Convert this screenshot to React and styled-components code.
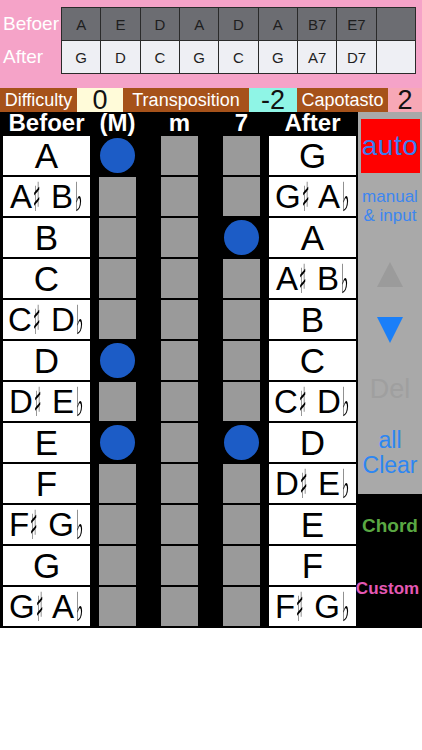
import React from 'react';
import styled, { createGlobalStyle } from 'styled-components';

const GlobalStyle = createGlobalStyle`
  html, body { margin: 0; padding: 0; background: #fff; }
  body { font-family: "Liberation Sans", Arial, sans-serif; }
  * { box-sizing: border-box; }
`;

const Screen = styled.div`
  width: 422px;
  height: 750px;
  background: #fff;
  overflow: hidden;
`;

const TopArea = styled.div`
  display: flex;
  align-items: flex-start;
  height: 88px;
  padding: 7px 6px 0 0;
  background: #f5a3c8;
`;

const Labels = styled.div`
  width: 61px;
  display: flex;
  flex-direction: column;
`;

const Label = styled.div`
  height: 33px;
  line-height: 33px;
  padding-left: 3px;
  color: #fff;
  font-size: 19px;
  white-space: nowrap;
`;

const ChordTable = styled.div`
  flex: 1;
  display: grid;
  grid-template-columns: repeat(9, 1fr);
  grid-template-rows: 32px 32px;
  gap: 1px;
  padding: 1px;
  background: #2a2a2a;
`;

const ChordCell = styled.div`
  display: flex;
  align-items: center;
  justify-content: center;
  background: ${(p) => (p.$dark ? '#6c6d72' : '#eeeff4')};
  color: #1e1e1e;
  font-size: 15px;
`;

const SettingsBar = styled.div`
  display: flex;
  height: 24px;
`;

const SettingLabel = styled.div`
  width: ${(p) => p.$w}px;
  display: flex;
  align-items: center;
  justify-content: center;
  background: #a6521a;
  color: #fff;
  font-size: 18px;
  white-space: nowrap;
`;

const SettingValue = styled.div`
  width: ${(p) => p.$w}px;
  display: flex;
  align-items: center;
  justify-content: center;
  background: ${(p) => p.$bg};
  color: #111;
  font-size: 27px;
  line-height: 1;
`;

const Main = styled.div`
  display: flex;
  height: 516px;
  background: #000;
`;

const Board = styled.div`
  width: 358px;
  padding: 0 0 2px 3px;
  display: grid;
  grid-template-columns: 87px 53px 53px 37px 87px;
  grid-template-rows: 22px repeat(12, 39px);
  column-gap: 9px;
  row-gap: 2px;
`;

const ColHead = styled.div`
  width: ${(p) => (p.$narrow ? '37px' : '87px')};
  display: flex;
  align-items: center;
  justify-content: center;
  color: #fff;
  font-weight: bold;
  font-size: 24px;
  line-height: 1;
  white-space: nowrap;
`;

const NoteCell = styled.div`
  display: flex;
  align-items: center;
  justify-content: center;
  background: #fff;
  color: #000;
  font-size: ${(p) => (p.$double ? 33 : 35)}px;
  line-height: 1;
  white-space: pre;
`;

const AccBox = styled.span`
  display: inline-flex;
  justify-content: center;
  width: 10px;
  line-height: 30px;
`;

const AccGlyph = styled.span`
  display: inline-block;
  flex: none;
  font-family: "DejaVu Sans", sans-serif;
  font-size: 40px;
  line-height: 30px;
  color: #000;
  transform: scaleX(0.4);
  filter: grayscale(1);
`;

const Slot = styled.div`
  width: 37px;
  display: flex;
  align-items: center;
  justify-content: center;
  background: ${(p) => (p.$on ? 'transparent' : '#9a9a9a')};
`;

const Dot = styled.div`
  width: 35px;
  height: 35px;
  flex: none;
  border-radius: 50%;
  background: #1c5cc6;
`;

const Side = styled.div`
  width: 64px;
  display: flex;
  flex-direction: column;
`;

const Controls = styled.div`
  height: 382px;
  display: flex;
  flex-direction: column;
  align-items: center;
  background: #a9a9a9;
`;

const AutoButton = styled.div`
  width: 59px;
  height: 54px;
  margin-top: 7px;
  display: flex;
  align-items: center;
  justify-content: center;
  background: #ff0000;
  color: #3b7cf0;
  font-size: 28px;
  letter-spacing: 0.5px;
`;

const ControlText = styled.div`
  margin-top: ${(p) => p.$mt}px;
  color: ${(p) => p.$color};
  font-size: ${(p) => p.$size}px;
  line-height: ${(p) => p.$lh}px;
  text-align: center;
  white-space: nowrap;
`;

const Arrow = styled.svg`
  display: block;
  margin-top: ${(p) => p.$mt}px;
  flex: none;
`;

const Extras = styled.div`
  flex: 1;
  display: flex;
  flex-direction: column;
  align-items: center;
  background: #000;
`;

const ExtraLabel = styled.div`
  margin-top: ${(p) => p.$mt}px;
  margin-left: ${(p) => p.$ml || 0}px;
  color: ${(p) => p.$color};
  font-weight: bold;
  font-size: ${(p) => p.$size}px;
  line-height: 1;
  white-space: nowrap;
`;

const before = ['A', 'E', 'D', 'A', 'D', 'A', 'B7', 'E7', ''];
const after = ['G', 'D', 'C', 'G', 'C', 'G', 'A7', 'D7', ''];

const notes = [
  ['A', 'G'],
  ['A♯ B♭', 'G♯ A♭'],
  ['B', 'A'],
  ['C', 'A♯ B♭'],
  ['C♯ D♭', 'B'],
  ['D', 'C'],
  ['D♯ E♭', 'C♯ D♭'],
  ['E', 'D'],
  ['F', 'D♯ E♭'],
  ['F♯ G♭', 'E'],
  ['G', 'F'],
  ['G♯ A♭', 'F♯ G♭'],
];

const marks = {
  0: [true, false, false],
  2: [false, false, true],
  5: [true, false, false],
  7: [true, false, true],
};

function NoteName({ name }) {
  const parts = name.split(/([♯♭])/);
  return (
    <>
      {parts.map((p, i) =>
        p === '♯' || p === '♭' ? (
          <AccBox key={i}>
            <AccGlyph>{p}</AccGlyph>
          </AccBox>
        ) : (
          <React.Fragment key={i}>{p}</React.Fragment>
        )
      )}
    </>
  );
}

export default function App() {
  return (
    <Screen>
      <GlobalStyle />
      <TopArea>
        <Labels>
          <Label>Befoer</Label>
          <Label>After</Label>
        </Labels>
        <ChordTable>
          {before.map((c, i) => (
            <ChordCell key={'b' + i} $dark>{c}</ChordCell>
          ))}
          {after.map((c, i) => (
            <ChordCell key={'a' + i}>{c}</ChordCell>
          ))}
        </ChordTable>
      </TopArea>
      <SettingsBar>
        <SettingLabel $w={77}>Difficulty</SettingLabel>
        <SettingValue $w={46} $bg="#fffbd9">0</SettingValue>
        <SettingLabel $w={126}>Transposition</SettingLabel>
        <SettingValue $w={48} $bg="#8ff5e6">-2</SettingValue>
        <SettingLabel $w={91}>Capotasto</SettingLabel>
        <SettingValue $w={34} $bg="#f7a8b6">2</SettingValue>
      </SettingsBar>
      <Main>
        <Board>
          <ColHead>Befoer</ColHead>
          <ColHead $narrow>(M)</ColHead>
          <ColHead $narrow>m</ColHead>
          <ColHead $narrow>7</ColHead>
          <ColHead>After</ColHead>
          {notes.map(([b, a], r) => {
            const m = marks[r] || [false, false, false];
            return (
              <React.Fragment key={r}>
                <NoteCell $double={b.length > 2}>
                  <NoteName name={b} />
                </NoteCell>
                {m.map((on, c) => (
                  <Slot key={c} $on={on}>
                    {on && <Dot />}
                  </Slot>
                ))}
                <NoteCell $double={a.length > 2}>
                  <NoteName name={a} />
                </NoteCell>
              </React.Fragment>
            );
          })}
        </Board>
        <Side>
          <Controls>
            <AutoButton>auto</AutoButton>
            <ControlText $mt={14} $color="#3d86f0" $size={17} $lh={19}>
              manual
              <br />& input
            </ControlText>
            <Arrow $mt={37} width="26" height="25" viewBox="0 0 26 25">
              <polygon points="13,0 26,25 0,25" fill="#9b9b9b" />
            </Arrow>
            <Arrow $mt={30} width="26" height="26" viewBox="0 0 26 26">
              <polygon points="0,0 26,0 13,26" fill="#1a7ff8" />
            </Arrow>
            <ControlText $mt={31} $color="#9f9f9f" $size={27} $lh={30}>
              Del
            </ControlText>
            <ControlText $mt={24} $color="#2d86f2" $size={23} $lh={25}>
              all
              <br />
              Clear
            </ControlText>
          </Controls>
          <Extras>
            <ExtraLabel $mt={22} $color="#5aa843" $size={19}>
              Chord
            </ExtraLabel>
            <ExtraLabel $mt={45} $ml={-5} $color="#e458b4" $size={17}>
              Custom
            </ExtraLabel>
          </Extras>
        </Side>
      </Main>
    </Screen>
  );
}
